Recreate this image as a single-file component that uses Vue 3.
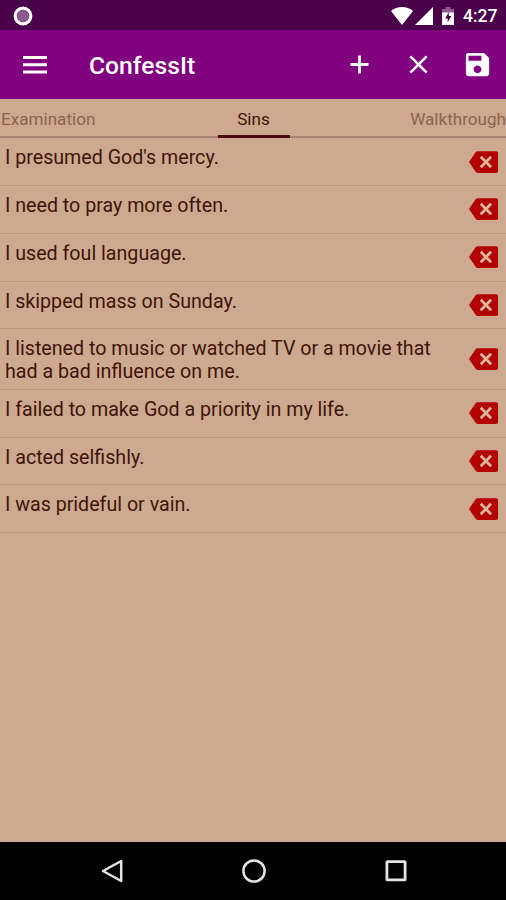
<script setup>
import { ref } from 'vue'

const tabs = ['Examination', 'Sins', 'Walkthrough']
const activeTab = ref('Sins')

const sins = ref([
  { id: 1, text: "I presumed God's mercy." },
  { id: 2, text: 'I need to pray more often.' },
  { id: 3, text: 'I used foul language.' },
  { id: 4, text: 'I skipped mass on Sunday.' },
  { id: 5, text: 'I listened to music or watched TV or a movie that had a bad influence on me.' },
  { id: 6, text: 'I failed to make God a priority in my life.' },
  { id: 7, text: 'I acted selfishly.' },
  { id: 8, text: 'I was prideful or vain.' },
])

function removeSin(id) {
  sins.value = sins.value.filter(s => s.id !== id)
}

function clearSins() {
  sins.value = []
}
</script>

<template>
  <div class="app">
    <div class="status-bar">
      <svg class="record" viewBox="0 0 20 20">
        <circle cx="10" cy="10" r="6" fill="#8d5a90" />
        <circle cx="10" cy="10" r="7.8" fill="none" stroke="#fff" stroke-width="3.2" />
      </svg>
      <svg class="wifi" viewBox="0 0 22 18">
        <path d="M11 18L0 4C6 -1.2 16 -1.2 22 4z" fill="#fff" />
      </svg>
      <svg class="signal" viewBox="0 0 18 18">
        <path d="M18 0v18H0z" fill="#fff" />
      </svg>
      <svg class="battery" viewBox="0 0 12 18">
        <path d="M3.5 0h5v2H12v4H0V2h3.5z" fill="#8f5a92" />
        <path d="M0 5.500h12V18H0z" fill="#fff" />
        <path d="M6.800 5L3.200 11.400h2.500v3.900l3.600-6.300H6.800z" fill="#4b004b" />
      </svg>
      <span class="clock">4:27</span>
    </div>

    <header class="toolbar">
      <button class="menu" aria-label="Menu">
        <svg viewBox="0 0 24 18"><path d="M0 0h24v3H0zM0 7.300h24v3H0zM0 14.600h24v3H0z" fill="#fff" /></svg>
      </button>
      <h1>ConfessIt</h1>
      <button class="action" aria-label="Add">
        <svg viewBox="0 0 24 24"><path d="M19 13.100h-5.900V19h-2.200v-5.900H5v-2.200h5.900V5h2.200v5.900H19z" fill="#fff" /></svg>
      </button>
      <button class="action" aria-label="Clear" @click="clearSins">
        <svg viewBox="0 0 24 24"><path d="M19 6.410L17.590 5 12 10.590 6.410 5 5 6.410 10.590 12 5 17.590 6.410 19 12 13.410 17.590 19 19 17.590 13.410 12z" fill="#fff" /></svg>
      </button>
      <button class="action" aria-label="Save">
        <svg viewBox="0 0 24 24"><path d="M17 3H5c-1.110 0-2 .9-2 2v14c0 1.100.89 2 2 2h14c1.100 0 2-.9 2-2V7l-4-4zm-5 15.700c-1.660 0-3-1.340-3-3s1.340-3 3-3 3 1.340 3 3-1.340 3-3 3zM15 9H5V5.300h10z" fill="#fff" /></svg>
      </button>
    </header>

    <nav class="tabs">
      <button
        v-for="tab in tabs"
        :key="tab"
        class="tab"
        :class="{ active: tab === activeTab }"
        @click="activeTab = tab"
      >{{ tab }}</button>
    </nav>

    <ul class="sins">
      <li v-for="sin in sins" :key="sin.id" class="sin">
        <span class="sin-text">{{ sin.text }}</span>
        <button class="delete" aria-label="Delete" @click="removeSin(sin.id)">
          <svg viewBox="0 0 24 18">
            <path d="M22.500 0H7.200c-.8 0-1.300.3-1.700.9L0 9l5.500 8.100c.4.500.9.900 1.700.9h15.300c.8 0 1.500-.6 1.500-1.400V1.400C24 .6 23.300 0 22.500 0z" fill="#b30000" />
            <path d="M9.700 4.700l8.600 8.600M18.300 4.700l-8.600 8.600" stroke="#dcb69c" stroke-width="2.300" />
          </svg>
        </button>
      </li>
    </ul>

    <div class="nav-bar">
      <svg viewBox="0 0 24 26">
        <path d="M21.200 3v20L3 13z" fill="none" stroke="#e4e4e4" stroke-width="2.500" stroke-linejoin="round" />
      </svg>
      <svg viewBox="0 0 24 26">
        <circle cx="12" cy="13" r="10.600" fill="none" stroke="#e4e4e4" stroke-width="2.500" />
      </svg>
      <svg viewBox="0 0 24 26">
        <rect x="2.900" y="3.700" width="18.200" height="18.200" rx=".5" fill="none" stroke="#e4e4e4" stroke-width="2.800" />
      </svg>
    </div>
  </div>
</template>

<style>
body {
  margin: 0;
  background: #cda98f;
}
</style>

<style scoped>
.app {
  display: flex;
  flex-direction: column;
  height: 900px;
  font-family: Roboto, 'Liberation Sans', sans-serif;
  background: #cda98f;
  color: #401408;
}

button {
  padding: 0;
  border: none;
  background: none;
  font: inherit;
  color: inherit;
  cursor: pointer;
}

svg {
  display: block;
}

.status-bar {
  display: flex;
  align-items: center;
  box-sizing: border-box;
  height: 30px;
  padding: 1px 9px 0 13px;
  background: #4b004b;
}

.record {
  width: 20px;
  height: 20px;
  margin-right: auto;
}

.wifi {
  width: 22px;
  height: 18px;
}

.signal {
  width: 18px;
  height: 18px;
  margin-left: 2px;
}

.battery {
  width: 12px;
  height: 18px;
  margin-left: 9px;
}

.clock {
  width: 34px;
  margin-left: 9px;
  font-size: 17.5px;
  font-weight: 500;
  line-height: 20px;
  color: #fff;
  white-space: nowrap;
}

.toolbar {
  display: flex;
  align-items: center;
  box-sizing: border-box;
  height: 69px;
  padding: 0 11.5px 0 23px;
  background: #800080;
}

.menu svg {
  width: 24px;
  height: 18px;
}

h1 {
  flex: 1;
  margin: 3px 0 0 42px;
  font-size: 24.7px;
  font-weight: 500;
  line-height: 30px;
  color: #fff;
}

.action {
  display: flex;
  justify-content: center;
  width: 59px;
}

.action:last-child {
  width: 35px;
  margin-left: 12px;
}

.action svg {
  width: 31px;
  height: 31px;
}

.tabs {
  display: grid;
  grid-template-columns: 1fr 72px 1fr;
  box-sizing: border-box;
  height: 39px;
  padding-left: 1px;
  border-bottom: 2px solid #a98370;
  font-size: 17.1px;
}

.tab {
  box-sizing: border-box;
  height: 39px;
  padding-top: 3px;
  border-bottom: 3px solid transparent;
  text-align: left;
  color: #8b6450;
}

.tab:last-child {
  text-align: right;
}

.tab.active {
  border-bottom-color: #4d0a10;
  text-align: center;
  color: #401408;
}

.sins {
  flex: 1;
  margin: 0;
  padding: 0.3px 0 0;
  list-style: none;
}

.sin {
  display: flex;
  align-items: center;
  justify-content: space-between;
  box-sizing: border-box;
  min-height: 47.75px;
  padding-right: 8px;
  border-bottom: 1px solid #bd957e;
}

.sin-text {
  align-self: flex-start;
  width: 440px;
  padding: 8px 0 5.6px 5px;
  font-size: 19.65px;
  line-height: 23px;
}

.delete svg {
  width: 29px;
  height: 22px;
}

.nav-bar {
  display: flex;
  align-items: center;
  justify-content: center;
  gap: 118px;
  box-sizing: border-box;
  height: 58px;
  padding-left: 1px;
  background: #000;
}

.nav-bar svg {
  width: 24px;
  height: 26px;
}
</style>
